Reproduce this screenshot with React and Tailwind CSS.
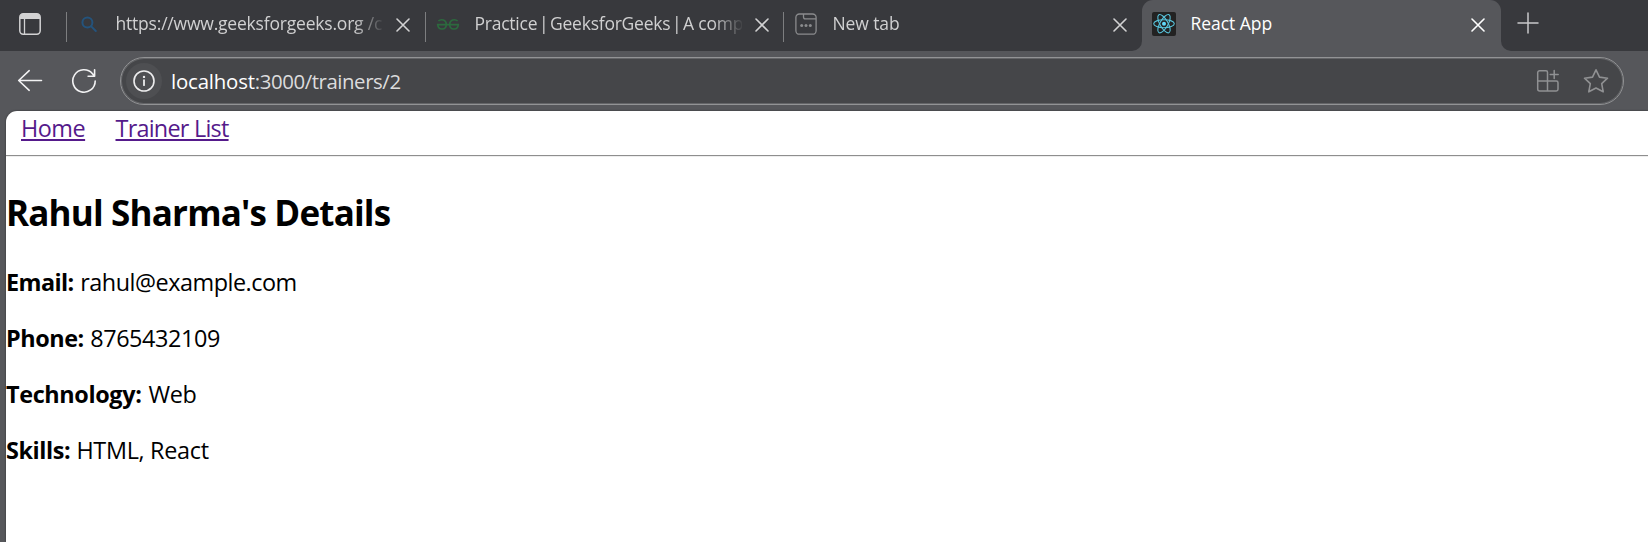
function Close({ bright }) {
  return (
    <svg width="14" height="14" viewBox="0 0 14 14" className="mt-0.5 ml-[13px] shrink-0" fill="none" stroke={bright ? "#ffffff" : "#d2d2d3"} strokeWidth="1.6" strokeLinecap="round">
      <path d="M1 1l12 12M13 1L1 13" />
    </svg>
  );
}

function TabActionsIcon() {
  return (
    <svg width="24" height="24" viewBox="0 0 24 24" fill="none" stroke="#d2d2d3" strokeWidth="1.5">
      <rect x="1.8" y="1.8" width="20.4" height="20.4" rx="3.4" />
      <path d="M2 7V5a3.2 3.200 0 0 1 3.200-3.200h13.600A3.200 3.200 0 0 1 22 5v2z" fill="#d2d2d3" stroke="none" />
      <path d="M6.500 7v15" strokeWidth="1.300" />
    </svg>
  );
}

function SearchIcon() {
  return (
    <svg width="24" height="24" viewBox="0 0 24 24" fill="none" stroke="#24537c" strokeWidth="2" strokeLinecap="round">
      <circle cx="10.4" cy="10.6" r="5" />
      <path d="M14.200 14.400l4.600 4.600" />
    </svg>
  );
}

function GfgIcon() {
  return (
    <svg width="24" height="24" viewBox="0 0 24 24" fill="none" stroke="#2c6a3e" strokeWidth="1.600">
      <path d="M2.400 9C5 6.600 10.300 7.600 10.300 12.400c0 5.600-8 6.400-8.600.2h20.600c-.6 6.200-8.600 5.400-8.600-.2 0-4.800 5.300-5.800 7.900-3.400" />
    </svg>
  );
}

function NewTabIcon() {
  return (
    <svg width="24" height="24" viewBox="0 0 24 24" fill="none" stroke="#8a8b8d" strokeWidth="1.3">
      <rect x="1.900" y="2" width="20.200" height="20.200" rx="3.500" />
      <path d="M9.500 2v3c0 1.200.7 1.900 1.900 1.900H22" />
      <g fill="#8a8b8d" stroke="none">
        <circle cx="7.700" cy="13.500" r="1.500" />
        <circle cx="12" cy="13.500" r="1.500" />
        <circle cx="16.300" cy="13.500" r="1.500" />
      </g>
    </svg>
  );
}

function ReactIcon() {
  return (
    <svg width="24" height="24" viewBox="0 0 24 24" fill="none" stroke="#58c4dc" strokeWidth="1.100">
      <rect width="24" height="24" rx="2" fill="#222222" stroke="none" />
      <circle cx="12" cy="11.700" r="2" fill="#61dafb" stroke="none" />
      <ellipse cx="12" cy="11.700" rx="10.300" ry="4" />
      <ellipse cx="12" cy="11.700" rx="10.300" ry="4" transform="rotate(60 12 11.7)" />
      <ellipse cx="12" cy="11.700" rx="10.300" ry="4" transform="rotate(120 12 11.7)" />
    </svg>
  );
}

function PlusIcon() {
  return (
    <svg width="22" height="22" viewBox="0 0 22 22" fill="none" stroke="#c8c8ca" strokeWidth="1.500" strokeLinecap="round">
      <path d="M11 1v20M1 11h20" />
    </svg>
  );
}

function BackIcon() {
  return (
    <svg width="26" height="24" viewBox="0 0 26 24" fill="none" stroke="#f2f2f3" strokeWidth="1.600" strokeLinecap="round" strokeLinejoin="round">
      <path d="M24.500 11.500H1.700M12.200 1.700L1.700 11.500l10.500 9.800" />
    </svg>
  );
}

function RefreshIcon() {
  return (
    <svg width="26" height="26" viewBox="0 0 26 26" fill="none" stroke="#f2f2f3" strokeWidth="1.600" strokeLinecap="round" strokeLinejoin="round">
      <path d="M24.200 13A11.200 11.200 0 1 1 21.500 5.700L23.300 8M23.600 1.700v6.500h-6.500" />
    </svg>
  );
}

function InfoIcon() {
  return (
    <svg width="24" height="24" viewBox="0 0 24 24" fill="none" stroke="#ececed" strokeWidth="1.600" strokeLinecap="round">
      <circle cx="12" cy="12" r="10" />
      <path d="M12 11.200v5" strokeWidth="1.800" />
      <circle cx="12" cy="7.900" r="1.200" fill="#ececed" stroke="none" />
    </svg>
  );
}

function AppsIcon() {
  return (
    <svg width="24" height="24" viewBox="0 0 24 24" fill="none" stroke="#909193" strokeWidth="1.500" strokeLinecap="round" strokeLinejoin="round">
      <path d="M11.500 22V3.200a1.500 1.500 0 0 0-1.500-1.500H3.700a2 2 0 0 0-2 2V20a2 2 0 0 0 2 2h16.600a1.700 1.700 0 0 0 1.700-1.700v-6.600a1.700 1.700 0 0 0-1.700-1.700H1.700M18.200 1.500v8M14.200 5.500h8" />
    </svg>
  );
}

function StarIcon() {
  return (
    <svg width="26" height="26" viewBox="0 0 26 26" fill="none" stroke="#909193" strokeWidth="1.600" strokeLinejoin="round">
      <path d="M13 1.800l3.500 7.300 8 1.100-5.800 5.500 1.500 8.100L13 20l-7.200 3.800 1.500-8.100-5.800-5.500 8-1.100z" />
    </svg>
  );
}

function Bar() {
  return <span className="mx-[-2.6px]">|</span>;
}

function Tab({ icon, spacing, children }) {
  return (
    <div className="flex h-12 shrink-0 items-center">
      <div className="mt-[5px] h-[30px] w-px bg-[#7d7e80]" />
      <div className="ml-[10px] shrink-0">{icon}</div>
      <div className={"mb-0.5 ml-[14.5px] w-[267px] shrink-0 overflow-hidden whitespace-nowrap leading-6 text-[#d0d0d1] [mask-image:linear-gradient(to_right,black_238px,transparent_269px)] " + spacing}>
        {children}
      </div>
      <Close />
    </div>
  );
}

function Detail({ label, labelClass, value, valueClass }) {
  return (
    <p className="flex h-8 whitespace-nowrap leading-8">
      <strong className={"shrink-0 font-bold " + labelClass}>{label}</strong>
      <span className={valueClass}>{value}</span>
    </p>
  );
}

export default function App() {
  return (
    <div className="flex h-[542px] w-full flex-col overflow-hidden bg-[#56575b] font-['Open_Sans',sans-serif]">
      <div className="flex h-[51px] shrink-0 text-[17.5px]">
        <div className="grid w-[1142px] shrink-0 grid-cols-[66px_359px_358px_359px] rounded-br-[10px] bg-[#38393d]">
          <div className="flex h-12 items-center pl-[18px]">
            <TabActionsIcon />
          </div>
          <Tab icon={<SearchIcon />} spacing="tracking-[-0.2px]">https://www.geeksforgeeks.org /c</Tab>
          <Tab icon={<GfgIcon />} spacing="tracking-[-0.24px]">
            Practice <Bar /> GeeksforGeeks <Bar /> A comp
          </Tab>
          <Tab icon={<NewTabIcon />} spacing="tracking-[-0.1px]">New tab</Tab>
        </div>
        <div className="w-[359px] shrink-0 bg-[#38393d]">
          <div className="h-full rounded-t-[11px] bg-[#56575b]">
            <div className="flex h-12 items-center pl-[10px]">
              <ReactIcon />
              <div className="mb-0.5 ml-[14.5px] w-[281px] leading-6 tracking-[-0.05px] text-white">React App</div>
              <div className="-ml-[14px]">
                <Close bright />
              </div>
            </div>
          </div>
        </div>
        <div className="flex flex-1 rounded-bl-[10px] bg-[#38393d] pt-3 pl-4">
          <PlusIcon />
        </div>
      </div>

      <div className="flex h-[60px] shrink-0 items-center pl-[17px]">
        <BackIcon />
        <div className="ml-[28px]">
          <RefreshIcon />
        </div>
        <div className="ml-[23px] flex h-12 w-[1504px] items-center rounded-full border border-[#929395] bg-[#454649] pl-[5px] shadow-[inset_0_0_0_1px_#646568]">
          <div className="flex size-9 items-center justify-center rounded-full bg-[#4e4f52]">
            <InfoIcon />
          </div>
          <div className="ml-[9px] flex-1 whitespace-nowrap text-[20.4px] leading-8 tracking-[-0.43px] text-[#dcdcdd]">
            <span className="tracking-[-0.18px] text-white">localhost</span>:3000/trainers/2
          </div>
          <AppsIcon />
          <div className="mr-[14px] ml-[23px]">
            <StarIcon />
          </div>
        </div>
      </div>

      <main className="ml-1.5 flex-1 rounded-tl-[11px] bg-white text-[23.4px] text-black shadow-[0_0_2px_rgba(0,0,0,0.5)]">
        <nav className="flex h-[45px] border-b border-[#8e8e8e] pt-px pl-[15px] leading-8 text-[#551a8b] shadow-[0_1px_0_#eeeeee]">
          <a className="h-8 w-[94.5px] tracking-[-0.5px] underline decoration-2 underline-offset-[2px]">Home</a>
          <a className="h-8 tracking-[-0.75px] underline decoration-2 underline-offset-[2px]">Trainer List</a>
        </nav>
        <div className="h-[45px] pt-[33px]">
          <h2 className="text-[35px] leading-[48px] font-bold tracking-[-0.82px] whitespace-nowrap">Rahul Sharma's Details</h2>
          <div className="mt-[29px] flex flex-col gap-6">
            <Detail label="Email:" labelClass="w-[74.2px] tracking-[-0.58px]" value="rahul@example.com" valueClass="tracking-[-0.47px]" />
            <Detail label="Phone:" labelClass="w-[84.2px] tracking-[-0.44px]" value="8765432109" valueClass="tracking-[-0.4px]" />
            <Detail label="Technology:" labelClass="w-[142.4px] tracking-[-0.36px]" value="Web" valueClass="tracking-[-0.25px]" />
            <Detail label="Skills:" labelClass="w-[70.4px] tracking-[-0.4px]" value="HTML, React" valueClass="tracking-[-0.3px]" />
          </div>
        </div>
      </main>
    </div>
  );
}
